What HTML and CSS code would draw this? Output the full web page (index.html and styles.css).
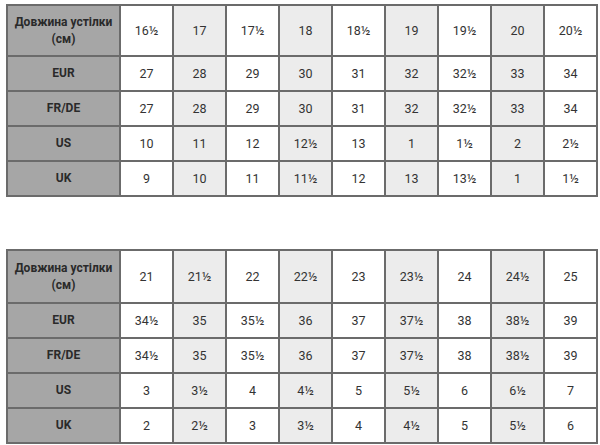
FILE: index.html
```html
<!DOCTYPE html>
<html>
<head>
<meta charset="utf-8">
<link rel="stylesheet" href="styles.css">
</head>
<body>
<div class="page">
<table class="size-table">
  <colgroup><col class="c-head"><col span="9" class="c-val"></colgroup>
  <tr class="r-top"><th>Довжина устілки<br>(см)</th><td>16½</td><td class="alt">17</td><td>17½</td><td class="alt">18</td><td>18½</td><td class="alt">19</td><td>19½</td><td class="alt">20</td><td>20½</td></tr>
  <tr><th>EUR</th><td>27</td><td class="alt">28</td><td>29</td><td class="alt">30</td><td>31</td><td class="alt">32</td><td>32½</td><td class="alt">33</td><td>34</td></tr>
  <tr><th>FR/DE</th><td>27</td><td class="alt">28</td><td>29</td><td class="alt">30</td><td>31</td><td class="alt">32</td><td>32½</td><td class="alt">33</td><td>34</td></tr>
  <tr><th>US</th><td>10</td><td class="alt">11</td><td>12</td><td class="alt">12½</td><td>13</td><td class="alt">1</td><td>1½</td><td class="alt">2</td><td>2½</td></tr>
  <tr><th>UK</th><td>9</td><td class="alt">10</td><td>11</td><td class="alt">11½</td><td>12</td><td class="alt">13</td><td>13½</td><td class="alt">1</td><td>1½</td></tr>
</table>
<table class="size-table second">
  <colgroup><col class="c-head"><col span="9" class="c-val"></colgroup>
  <tr class="r-top"><th>Довжина устілки<br>(см)</th><td>21</td><td class="alt">21½</td><td>22</td><td class="alt">22½</td><td>23</td><td class="alt">23½</td><td>24</td><td class="alt">24½</td><td>25</td></tr>
  <tr><th>EUR</th><td>34½</td><td class="alt">35</td><td>35½</td><td class="alt">36</td><td>37</td><td class="alt">37½</td><td>38</td><td class="alt">38½</td><td>39</td></tr>
  <tr><th>FR/DE</th><td>34½</td><td class="alt">35</td><td>35½</td><td class="alt">36</td><td>37</td><td class="alt">37½</td><td>38</td><td class="alt">38½</td><td>39</td></tr>
  <tr><th>US</th><td>3</td><td class="alt">3½</td><td>4</td><td class="alt">4½</td><td>5</td><td class="alt">5½</td><td>6</td><td class="alt">6½</td><td>7</td></tr>
  <tr><th>UK</th><td>2</td><td class="alt">2½</td><td>3</td><td class="alt">3½</td><td>4</td><td class="alt">4½</td><td>5</td><td class="alt">5½</td><td>6</td></tr>
</table>
</div>
</body>
</html>
```
FILE: styles.css
```css
html, body {
  margin: 0;
  padding: 0;
  background: #ffffff;
}
.page {
  padding: 4px 0 0 6px;
  display: flex;
  flex-direction: column;
  gap: 52px;
  align-items: flex-start;
}
.size-table {
  border-collapse: collapse;
  table-layout: fixed;
  width: 591px;
  font-family: Roboto, "DejaVu Sans", sans-serif;
  font-size: 12.5px;
  color: #333333;
}
.c-head { width: 113px; }
.c-val { width: 53px; }
.size-table th,
.size-table td {
  border: 2px solid #6b6b6b;
  text-align: center;
  vertical-align: middle;
  padding: 0;
  height: 33px;
}
.size-table th {
  background: #a6a6a6;
  font-weight: bold;
  font-size: 12px;
  color: #2a2a2a;
  line-height: 17px;
}
.size-table td { background: #ffffff; }
.size-table td.alt { background: #ececec; }
.size-table .r-top th,
.size-table .r-top td { height: 49px; }
.second .r-top th,
.second .r-top td { height: 51px; }
```
